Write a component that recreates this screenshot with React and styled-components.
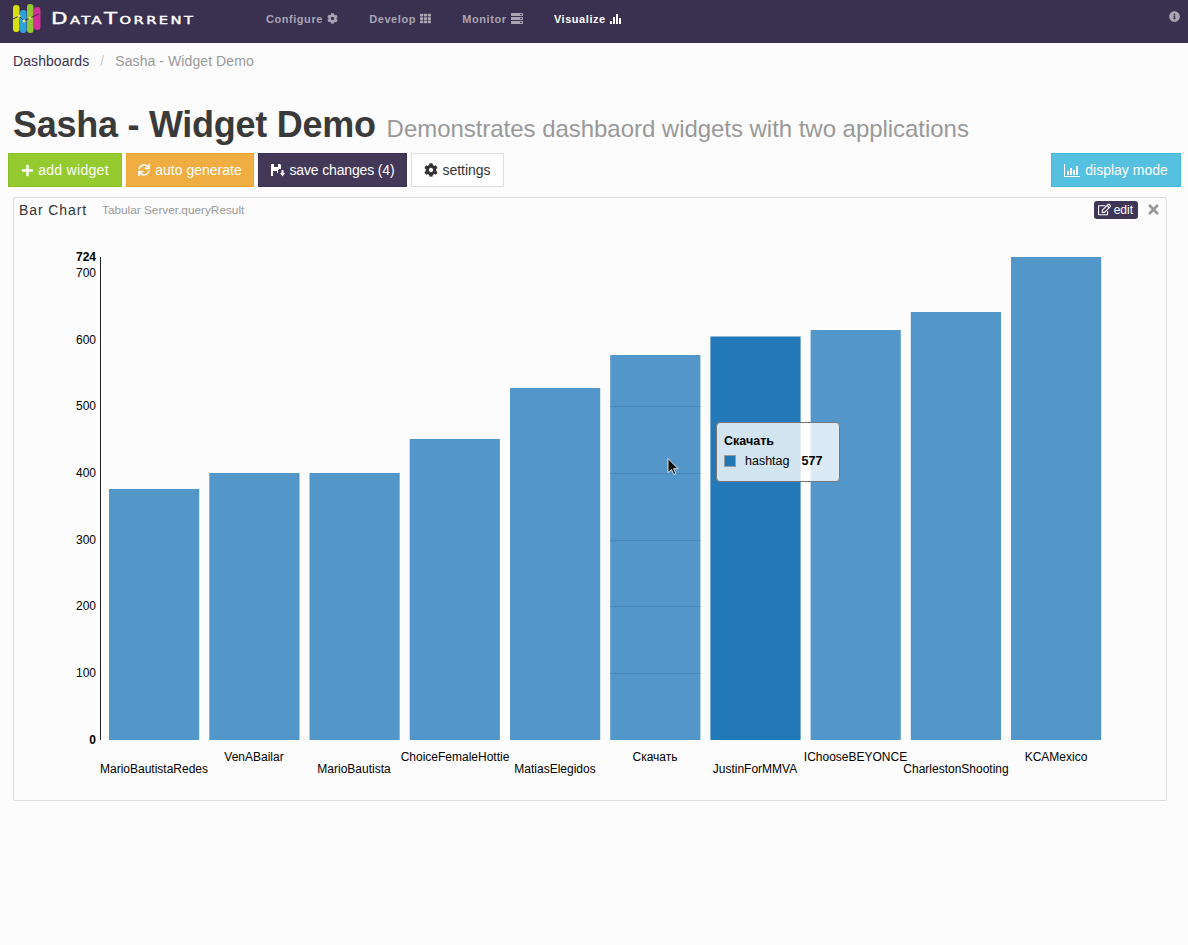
import React from 'react';
import styled, { createGlobalStyle } from 'styled-components';
import { FaCog, FaTh, FaPlus, FaSync, FaRegEdit, FaTimes, FaInfoCircle } from 'react-icons/fa';

const GlobalStyle = createGlobalStyle`
    html, body {
        margin: 0;
        padding: 0;
        background: #fcfcfc;
        font-family: "Liberation Sans", Arial, sans-serif;
    }
    #root {
        min-height: 945px;
    }
`

const Navbar = styled.div`
    display: flex;
    align-items: center;
    height: 43px;
    background: #3a3050;
    padding-left: 13px;
    padding-right: 8px;
`

const Brand = styled.div`
    display: flex;
    align-items: center;
    width: 253px;
    flex: none;
    padding-bottom: 5px;
`

const BrandName = styled.span`
    margin-left: 10px;
    color: #fff;
    font-family: "DejaVu Sans", sans-serif;
    font-size: 16px;
    font-variant: small-caps;
    letter-spacing: 1.8px;
    line-height: 20px;
    white-space: nowrap;
    -webkit-text-stroke: 0.4px #fff;
    transform: scaleX(1.34);
    transform-origin: left center;
`

const NavItems = styled.div`
    display: flex;
    gap: 31.4px;
    flex: 1;
`

const NavItem = styled.a`
    display: flex;
    align-items: center;
    gap: 4px;
    font-size: 11px;
    font-weight: bold;
    letter-spacing: 0.55px;
    color: ${props => props.active ? '#fff' : '#a9a5b3'};
    position: relative;
    top: -3px;
`

const InfoIcon = styled(FaInfoCircle)`
    color: #a9a5b3;
    font-size: 11px;
    position: relative;
    top: -5px;
`

const Breadcrumb = styled.div`
    display: flex;
    padding: 10px 13px 0;
    font-size: 14px;
    line-height: 17px;
    letter-spacing: 0.08px;
    color: #999;
`

const CrumbLink = styled.span`
    color: #3a3050;
`

const CrumbSep = styled.span`
    color: #ccc;
    margin: 0 11px;
`

const Title = styled.h1`
    margin: 35px 0 0 13px;
    font-size: 36px;
    line-height: 40px;
    font-weight: bold;
    letter-spacing: -0.27px;
    color: #3a3a3a;
    white-space: nowrap;
`

const Subtitle = styled.small`
    font-size: 24px;
    font-weight: normal;
    letter-spacing: -0.04px;
    color: #999;
    margin-left: 11px;
`

const Toolbar = styled.div`
    display: flex;
    justify-content: space-between;
    margin-top: 4px;
    padding: 0 7px 0 8px;
`

const ButtonGroup = styled.div`
    display: flex;
    gap: 4px;
`

const Button = styled.button`
    display: flex;
    align-items: center;
    justify-content: center;
    gap: ${props => props.gap || 5}px;
    box-sizing: border-box;
    height: 34px;
    width: ${props => props.width}px;
    padding: 0;
    border: solid 1px ${props => props.border};
    background: ${props => props.color};
    color: ${props => props.text};
    font-family: inherit;
    font-size: 14px;
    letter-spacing: ${props => props.spacing || 0}px;
`

const Panel = styled.div`
    position: relative;
    box-sizing: border-box;
    height: 604px;
    margin: 10px 21px 0 13px;
    border: solid 1px #ddd;
    border-radius: 2px;
`

const PanelHeader = styled.div`
    display: flex;
    align-items: center;
    box-sizing: border-box;
    height: 27px;
    padding: 0 5px 4px;
`

const PanelTitle = styled.span`
    font-size: 14px;
    letter-spacing: 0.9px;
    color: #333;
`

const PanelSubtitle = styled.span`
    margin-left: 15px;
    font-size: 11.800px;
    color: #999;
`

const EditButton = styled.span`
    display: flex;
    align-items: center;
    gap: 3px;
    box-sizing: border-box;
    height: 18px;
    margin-left: auto;
    padding: 0 5px 0 4px;
    border-radius: 3px;
    background: #3f3557;
    color: #fff;
    font-size: 12px;
`

const CloseIcon = styled(FaTimes)`
    margin-left: 8px;
    font-size: 15px;
    color: #999;
`

const Chart = styled.svg`
    display: block;
`

const AxisText = styled.text`
    font-family: "Liberation Sans", Arial, sans-serif;
    font-size: 12px;
    font-weight: ${props => props.bold ? 'bold' : 'normal'};
    fill: #000;
`

const Tooltip = styled.div`
    position: absolute;
    left: 702px;
    top: 224px;
    box-sizing: border-box;
    width: 124px;
    height: 60px;
    padding: 11px 7px;
    background: rgba(255, 255, 255, 0.8);
    border: solid 1px #777;
    border-radius: 4px;
    font-size: 12.500px;
    color: #000;
`

const TooltipHead = styled.div`
    font-weight: bold;
    line-height: 14px;
`

const TooltipRow = styled.div`
    display: flex;
    align-items: center;
    margin-top: 6px;
    line-height: 14px;
`

const Swatch = styled.span`
    box-sizing: border-box;
    width: 12px;
    height: 12px;
    background: #1f77b4;
    border: solid 1px #999;
    margin-right: 9px;
`

const TooltipValue = styled.b`
    margin-left: 12px;
`

const Cursor = styled.svg`
    position: absolute;
    left: 653px;
    top: 260px;
`

const bars = [
    { label: 'MarioBautistaRedes', x: 109, top: 489, cx: 154, row: 1 },
    { label: 'VenABailar', x: 209.3, top: 473, cx: 254, row: 0 },
    { label: 'MarioBautista', x: 309.5, top: 473, cx: 354, row: 1 },
    { label: 'ChoiceFemaleHottie', x: 409.7, top: 439, cx: 455, row: 0 },
    { label: 'MatiasElegidos', x: 510, top: 388, cx: 555, row: 1 },
    { label: 'Скачать', x: 610.2, top: 355, cx: 655, row: 0 },
    { label: 'JustinForMMVA', x: 710.4, top: 336.5, cx: 755, row: 1, active: true },
    { label: 'IChooseBEYONCE', x: 810.6, top: 330, cx: 855.5, row: 0 },
    { label: 'CharlestonShooting', x: 910.8, top: 312, cx: 956, row: 1 },
    { label: 'KCAMexico', x: 1011, top: 257, cx: 1056, row: 0 },
]

const ticks = [
    { v: 0, y: 740, bold: true },
    { v: 100, y: 673 },
    { v: 200, y: 606 },
    { v: 300, y: 540 },
    { v: 400, y: 473 },
    { v: 500, y: 406 },
    { v: 600, y: 340 },
    { v: 700, y: 273 },
    { v: 724, y: 257, bold: true },
]

const Logo = () => (
    <svg width="28" height="30" viewBox="0 0 28 30">
        <rect x="0" y="1" width="6.500" height="27" rx="3" fill="#d8de10" />
        <rect x="7" y="6" width="6.500" height="23" rx="3" fill="#2aa3dc" />
        <rect x="14" y="0" width="6.500" height="29" rx="3" fill="#8fc832" />
        <rect x="21" y="3" width="6.500" height="23" rx="3" fill="#d6309a" />
        <polyline points="0,15 6,12 11,17 17,14 26,10" fill="none" stroke="#3a3050" strokeWidth="1" />
        <circle cx="6" cy="12" r="1.500" fill="#e8dc70" />
        <circle cx="11" cy="17" r="1.500" fill="#e8dc70" />
        <circle cx="17" cy="14" r="1.500" fill="#e8dc70" />
    </svg>
)

const TasksIcon = () => (
    <svg width="12" height="11" viewBox="0 0 12 11" fill="currentColor">
        <rect x="0" y="0" width="12" height="3" rx="0.500" />
        <rect x="0" y="4" width="12" height="3" rx="0.500" />
        <rect x="0" y="8" width="12" height="3" rx="0.500" />
        <rect x="9" y="1" width="2" height="1" fill="#3a3050" />
        <rect x="9" y="5" width="2" height="1" fill="#3a3050" />
        <rect x="9" y="9" width="2" height="1" fill="#3a3050" />
    </svg>
)

const BarsIcon = () => (
    <svg width="11" height="10" viewBox="0 0 11 10" fill="currentColor">
        <rect x="0" y="7" width="2" height="3" />
        <rect x="3" y="3" width="2" height="7" />
        <rect x="6" y="0" width="2" height="10" />
        <rect x="9" y="4" width="2" height="6" />
    </svg>
)

const ChartIcon = () => (
    <svg width="16" height="13" viewBox="0 0 16 13" fill="currentColor">
        <rect x="0" y="0" width="1" height="13" />
        <rect x="0" y="12" width="16" height="1" />
        <rect x="3" y="7" width="2" height="4" />
        <rect x="6" y="4" width="2" height="7" />
        <rect x="9" y="6" width="2" height="5" />
        <rect x="12" y="2" width="2" height="9" />
    </svg>
)

const SaveIcon = () => (
    <svg width="14" height="14" viewBox="0 0 14 14" fill="currentColor">
        <path d="M0 1h9l1 1v4H8V7H7v3H5v3H0z" />
        <rect x="3" y="1" width="4" height="3" fill="#433858" />
        <rect x="2" y="8" width="4" height="5" fill="#433858" />
        <path d="M10.500 7h2v3H14l-2.500 3.500L9 10h1.500z" />
    </svg>
)

const App = () => {
    return (
        <>
            <GlobalStyle />
            <Navbar>
                <Brand>
                    <Logo />
                    <BrandName>DataTorrent</BrandName>
                </Brand>
                <NavItems>
                    <NavItem>Configure <FaCog /></NavItem>
                    <NavItem>Develop <FaTh /></NavItem>
                    <NavItem>Monitor <TasksIcon /></NavItem>
                    <NavItem active>Visualize <BarsIcon /></NavItem>
                </NavItems>
                <InfoIcon />
            </Navbar>
            <Breadcrumb>
                <CrumbLink>Dashboards</CrumbLink>
                <CrumbSep>/</CrumbSep>
                <span>Sasha - Widget Demo</span>
            </Breadcrumb>
            <Title>
                Sasha - Widget Demo
                <Subtitle>Demonstrates dashbaord widgets with two applications</Subtitle>
            </Title>
            <Toolbar>
                <ButtonGroup>
                    <Button width={114} color="#95cb2f" border="#8abf28" text="#fff" gap={4} spacing={0.3}><FaPlus size={13} /> add widget</Button>
                    <Button width={128} color="#f0ad42" border="#eca42f" text="#fff"><FaSync size={12} /> auto generate</Button>
                    <Button width={149} color="#433858" border="#3a3050" text="#fff" spacing={-0.15}><SaveIcon /> save changes (4)</Button>
                    <Button width={93} color="#fff" border="#ddd" text="#333" gap={4}><FaCog size={14} /> settings</Button>
                </ButtonGroup>
                <Button width={130} color="#56c0e0" border="#46b8da" text="#fff"><ChartIcon /> display mode</Button>
            </Toolbar>
            <Panel>
                <PanelHeader>
                    <PanelTitle>Bar Chart</PanelTitle>
                    <PanelSubtitle>Tabular Server.queryResult</PanelSubtitle>
                    <EditButton><FaRegEdit size={13} /> edit</EditButton>
                    <CloseIcon />
                </PanelHeader>
                <Chart width="1152" height="575" viewBox="14 225 1152 575">
                    {bars.map(bar => (
                        <rect
                            key={bar.label}
                            x={bar.x}
                            y={bar.top}
                            width="90.200"
                            height={740 - bar.top}
                            fill={bar.active ? '#2379b7' : '#5397ca'}
                        />
                    ))}
                    {[406, 473, 540, 606, 673].map(y => (
                        <line key={y} x1="610.200" x2="700.400" y1={y + 0.5} y2={y + 0.5} stroke="#4a88ba" strokeWidth="1" />
                    ))}
                    <line x1="100.500" x2="100.500" y1="257" y2="740" stroke="#222" strokeWidth="1" />
                    {ticks.map(t => (
                        <AxisText key={t.v} x="96" y={t.y + 4} textAnchor="end" bold={t.bold}>{t.v}</AxisText>
                    ))}
                    {bars.map(bar => (
                        <AxisText key={bar.label} x={bar.cx} y={bar.row ? 773 : 761} textAnchor="middle">{bar.label}</AxisText>
                    ))}
                </Chart>
                <Tooltip>
                    <TooltipHead>Скачать</TooltipHead>
                    <TooltipRow>
                        <Swatch />
                        hashtag
                        <TooltipValue>577</TooltipValue>
                    </TooltipRow>
                </Tooltip>
                <Cursor width="12" height="18" viewBox="0 0 12 18">
                    <path d="M1 0.500v14l3.500-3 2.300 5 2-1-2.300-4.800H11z" fill="#111" stroke="#fff" strokeWidth="0.800" />
                </Cursor>
            </Panel>
        </>
    );
}

export default App;
